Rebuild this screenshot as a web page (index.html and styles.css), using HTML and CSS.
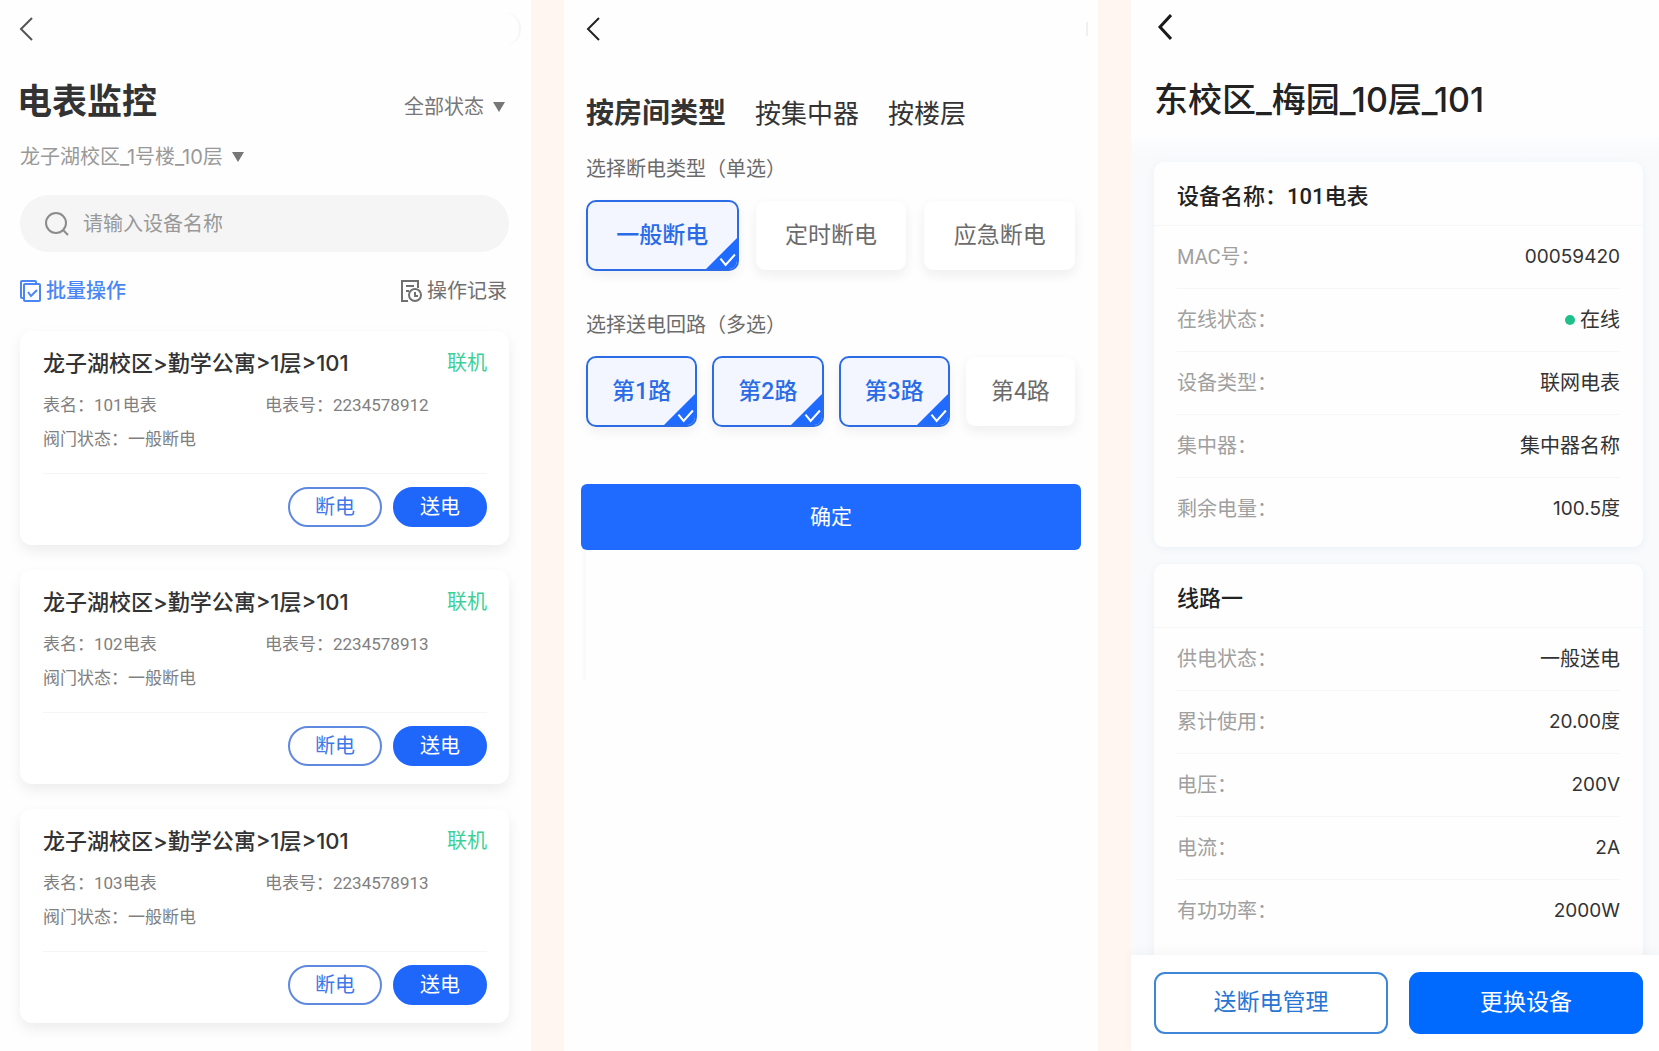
FILE: index.html
```html
<!DOCTYPE html>
<html lang="zh-CN">
<head>
<meta charset="utf-8">
<meta name="viewport" content="width=device-width, initial-scale=1">
<title>电表监控</title>
<link rel="stylesheet" href="styles.css">
</head>
<body>
<div class="board">

  <main class="screen monitor">
    <header class="topbar">
      <button class="back" type="button" aria-label="返回"><svg width="14" height="26" viewBox="0 0 14 26" fill="none" stroke="#555" stroke-width="2"><path d="M13 2 2 13l11 11"/></svg></button>
      <span class="capsule"></span>
    </header>
    <div class="title-row">
      <h1 class="title">电表监控</h1>
      <div class="picker">
        <select class="picker-select" aria-label="状态"><option>全部状态</option></select>
        <svg class="caret" width="12" height="10" viewBox="0 0 12 10"><path d="M0 0h12L6 10z"/></svg>
      </div>
    </div>
    <div class="picker place">
      <select class="picker-select" aria-label="位置"><option>龙子湖校区_1号楼_10层</option></select>
      <svg class="caret" width="12" height="10" viewBox="0 0 12 10"><path d="M0 0h12L6 10z"/></svg>
    </div>
    <div class="search">
      <svg width="24" height="26" viewBox="0 0 24 26" fill="none" stroke="#8c8c8c" stroke-width="2"><circle cx="11" cy="12" r="10"/><path d="m18 19 5 5"/></svg>
      <input class="search-input" type="text" placeholder="请输入设备名称" aria-label="设备名称">
    </div>
    <div class="tools">
      <button class="tool tool-batch" type="button">
        <svg width="21" height="22" viewBox="0 0 21 22" fill="none" stroke="currentColor" stroke-width="2"><path d="M4 18H2q-1 0-1-1V2q0-1 1-1h13q1 0 1 1v2"/><rect x="4" y="4" width="16" height="17" rx="1"/><path d="m8 12 3 4 6-6"/></svg>
        批量操作
      </button>
      <a class="tool tool-log" href="#">
        <svg width="21" height="22" viewBox="0 0 21 22" fill="none" stroke="currentColor" stroke-width="2"><path d="M7 21H1V1h16v7"/><path d="M5 6h8M5 11h3"/><circle cx="14" cy="15" r="6"/><path d="M14 12v4h3"/></svg>
        操作记录
      </a>
    </div>

    <section class="meters">
      <article class="meter">
        <div class="meter-head"><h2 class="meter-name">龙子湖校区&gt;勤学公寓&gt;1层&gt;101</h2><span class="status">联机</span></div>
        <div class="meta"><span>表名：101电表</span><span>电表号：2234578912</span><span>阀门状态：一般断电</span></div>
        <div class="meter-actions"><button class="pill" type="button">断电</button><button class="pill pill-solid" type="button">送电</button></div>
      </article>
      <article class="meter">
        <div class="meter-head"><h2 class="meter-name">龙子湖校区&gt;勤学公寓&gt;1层&gt;101</h2><span class="status">联机</span></div>
        <div class="meta"><span>表名：102电表</span><span>电表号：2234578913</span><span>阀门状态：一般断电</span></div>
        <div class="meter-actions"><button class="pill" type="button">断电</button><button class="pill pill-solid" type="button">送电</button></div>
      </article>
      <article class="meter">
        <div class="meter-head"><h2 class="meter-name">龙子湖校区&gt;勤学公寓&gt;1层&gt;101</h2><span class="status">联机</span></div>
        <div class="meta"><span>表名：103电表</span><span>电表号：2234578913</span><span>阀门状态：一般断电</span></div>
        <div class="meter-actions"><button class="pill" type="button">断电</button><button class="pill pill-solid" type="button">送电</button></div>
      </article>
    </section>
  </main>

  <form class="screen control">
    <header class="topbar">
      <button class="back" type="button" aria-label="返回"><svg width="14" height="26" viewBox="0 0 14 26" fill="none" stroke="#222" stroke-width="2"><path d="M13 2 2 13l11 11"/></svg></button>
      <span class="capsule-edge"></span>
    </header>
    <nav class="tabs">
      <button class="tab tab-active" type="button">按房间类型</button>
      <button class="tab" type="button">按集中器</button>
      <button class="tab" type="button">按楼层</button>
    </nav>
    <fieldset class="group">
      <legend class="legend">选择断电类型（单选）</legend>
      <div class="options options-3">
        <label class="option"><input class="choice" type="radio" name="cut" checked><span>一般断电</span><svg class="tick" viewBox="0 0 32 32"><path class="tick-bg" d="M32 0v32H0z"/><path class="tick-mark" d="m15 21 5 6 9-10"/></svg></label>
        <label class="option"><input class="choice" type="radio" name="cut"><span>定时断电</span></label>
        <label class="option"><input class="choice" type="radio" name="cut"><span>应急断电</span></label>
      </div>
    </fieldset>
    <fieldset class="group">
      <legend class="legend">选择送电回路（多选）</legend>
      <div class="options options-4">
        <label class="option"><input class="choice" type="checkbox" checked><span>第1路</span><svg class="tick" viewBox="0 0 32 32"><path class="tick-bg" d="M32 0v32H0z"/><path class="tick-mark" d="m15 21 5 6 9-10"/></svg></label>
        <label class="option"><input class="choice" type="checkbox" checked><span>第2路</span><svg class="tick" viewBox="0 0 32 32"><path class="tick-bg" d="M32 0v32H0z"/><path class="tick-mark" d="m15 21 5 6 9-10"/></svg></label>
        <label class="option"><input class="choice" type="checkbox" checked><span>第3路</span><svg class="tick" viewBox="0 0 32 32"><path class="tick-bg" d="M32 0v32H0z"/><path class="tick-mark" d="m15 21 5 6 9-10"/></svg></label>
        <label class="option"><input class="choice" type="checkbox"><span>第4路</span></label>
      </div>
    </fieldset>
    <button class="confirm" type="submit">确定</button>
    <div class="sheet-edge"></div>
  </form>

  <main class="screen detail">
    <header class="detail-head">
      <button class="back" type="button" aria-label="返回"><svg width="15" height="28" viewBox="0 0 15 28" fill="none" stroke="#1a1a1a" stroke-width="3"><path d="M14 2 3 14l11 12"/></svg></button>
      <h1 class="title title-device">东校区_梅园_10层_101</h1>
    </header>
    <div class="panels">
      <section class="panel">
        <h2 class="panel-title">设备名称：101电表</h2>
        <dl class="rows">
          <div class="row"><dt>MAC号：</dt><dd class="number">00059420</dd></div>
          <div class="row"><dt>在线状态：</dt><dd class="online">在线</dd></div>
          <div class="row"><dt>设备类型：</dt><dd>联网电表</dd></div>
          <div class="row"><dt>集中器：</dt><dd>集中器名称</dd></div>
          <div class="row"><dt>剩余电量：</dt><dd class="number">100.5度</dd></div>
        </dl>
      </section>
      <section class="panel panel-open">
        <h2 class="panel-title">线路一</h2>
        <dl class="rows">
          <div class="row"><dt>供电状态：</dt><dd>一般送电</dd></div>
          <div class="row"><dt>累计使用：</dt><dd class="number">20.00度</dd></div>
          <div class="row"><dt>电压：</dt><dd class="number">200V</dd></div>
          <div class="row"><dt>电流：</dt><dd class="number">2A</dd></div>
          <div class="row"><dt>有功功率：</dt><dd class="number">2000W</dd></div>
        </dl>
      </section>
    </div>
    <footer class="actions">
      <button class="action" type="button">送断电管理</button>
      <button class="action action-solid" type="button">更换设备</button>
    </footer>
  </main>

</div>
</body>
</html>
```
FILE: styles.css
```css
* { box-sizing: border-box; }

body {
  margin: 0;
  background: #fff6f1;
  color: #222;
  font-family: Roboto, "Noto Sans CJK SC", sans-serif;
  font-size: 20px;
  line-height: 30px;
}

h1, h2, dl, dd, fieldset { margin: 0; }

button, input, select {
  margin: 0;
  padding: 0;
  border: 0;
  background: none;
  color: inherit;
  font: inherit;
}

svg { display: block; flex: none; }

.board {
  display: grid;
  grid-template-columns: 531fr 534fr 528fr;
  gap: 33px;
  min-height: 100vh;
}

.screen {
  display: flex;
  flex-direction: column;
  min-width: 0;
  background: #fefefe;
}

.topbar {
  display: flex;
  align-items: center;
  justify-content: space-between;
  height: 58px;
}

.title {
  font-size: 35px;
  line-height: 48px;
  font-weight: 500;
}

.title-device, .meter-name, .place, .number {
  font-family: Inter, "Noto Sans CJK SC", sans-serif;
}

/* meter list */

.monitor { padding: 0 22px 0 20px; }

.monitor .topbar { margin-right: -12px; }

.monitor .back { margin-left: -1px; }

.capsule {
  width: 34px;
  height: 34px;
  border-right: 2px solid #f5f5f5;
  border-radius: 17px;
}

.title-row {
  display: flex;
  align-items: flex-end;
  justify-content: space-between;
  margin: 21px 4px 0 -3px;
}

.monitor .title { font-weight: 700; color: #333; }

.picker {
  display: flex;
  align-items: center;
  gap: 9px;
  color: #777;
}

.title-row .picker { margin-bottom: 5px; }

.picker-select { appearance: none; }

.caret { fill: #777; }

.place {
  margin-top: 15px;
  color: #999;
}

.search {
  display: flex;
  align-items: center;
  gap: 14px;
  height: 57px;
  margin-top: 23px;
  padding: 0 25px;
  border-radius: 29px;
  background: #f5f5f5;
}

.search-input {
  flex: 1;
  min-width: 0;
  outline: 0;
}

.search-input::placeholder { color: #999; opacity: 1; }

.tools {
  display: flex;
  justify-content: space-between;
  margin: 24px 2px 0 0;
}

.tool {
  display: flex;
  align-items: center;
  gap: 5px;
  color: #707070;
  text-decoration: none;
}

.tool-batch { color: #4a86f5; font-weight: 500; }

.meters {
  display: grid;
  gap: 25px;
  margin-top: 25px;
}

.meter {
  padding: 17px 22px 18px 23px;
  border-radius: 12px;
  background: #fff;
  box-shadow: 0 6px 14px rgba(0, 0, 0, .07);
}

.meter-head {
  display: flex;
  justify-content: space-between;
}

.meter-name {
  color: #333;
  font-size: 22px;
  font-weight: 500;
  line-height: 30px;
}

.status { color: #3dcf97; }

.meta {
  display: grid;
  grid-template-columns: 1fr 1fr;
  gap: 10px 0;
  padding: 15px 0 22px;
  border-bottom: 1px solid #f5f5f5;
  color: #808080;
  font-size: 17px;
  line-height: 24px;
}

.meter-actions {
  display: flex;
  justify-content: flex-end;
  gap: 11px;
  padding-top: 13px;
}

.pill {
  width: 94px;
  height: 40px;
  border: 2px solid #5f88e0;
  border-radius: 20px;
  color: #3f78ea;
}

.pill-solid {
  border-color: #1f66fb;
  background: #1f66fb;
  color: #fff;
}

/* circuit selection */

.control { padding: 0 22px; }

.capsule-edge {
  width: 2px;
  height: 14px;
  margin-right: -12px;
  background: #f0f0f2;
}

.tabs {
  display: flex;
  align-items: center;
  gap: 29px;
  height: 40px;
  margin-top: 36px;
}

.tab {
  color: #333;
  font-size: 26px;
  white-space: nowrap;
}

.tab-active { font-size: 28px; font-weight: 700; }

.group {
  min-width: 0;
  margin-top: 20px;
  padding: 0;
  border: 0;
}

.group + .group { margin-top: 39px; }

.legend { padding: 0; color: #6b6b6b; }

.options { display: grid; margin-top: 16px; }

.options-3 { grid-template-columns: repeat(3, 1fr); gap: 16px; }

.options-4 { grid-template-columns: repeat(4, 1fr); gap: 15px; }

.option {
  position: relative;
  display: flex;
  align-items: center;
  justify-content: center;
  height: 71px;
  border: 2px solid transparent;
  border-radius: 10px;
  background: #fff;
  background-clip: padding-box;
  box-shadow: 0 5px 12px rgba(0, 0, 0, .06);
  overflow: hidden;
  color: #6b6b6b;
  font-size: 23px;
}

.option:has(:checked) {
  border-color: #2b6ce6;
  background: #f3f6ff;
  color: #2b6ce6;
  font-weight: 500;
}

.choice {
  position: absolute;
  opacity: 0;
}

.tick {
  position: absolute;
  right: -1px;
  bottom: -1px;
  width: 33px;
  height: 33px;
}

.tick-bg { fill: #1f6bff; }

.tick-mark { fill: none; stroke: #fff; stroke-width: 2; }

.confirm {
  height: 66px;
  margin: 57px -5px 0;
  border-radius: 6px;
  background: #1f6bff;
  color: #fff;
  font-size: 21px;
}

.sheet-edge {
  width: 5px;
  height: 130px;
  margin-left: -5px;
  background: linear-gradient(to right, #fefefe, #f8f8f8);
}

/* device detail */

.detail { height: 100vh; }

.detail-head { padding: 13px 22px 13px 26px; }

.detail-head .title-device {
  margin: 35px 0 0 -3px;
  font-size: 34px;
}

.detail .back { display: block; }

.panels {
  display: flex;
  flex: 1;
  flex-direction: column;
  gap: 17px;
  min-height: 0;
  padding: 25px 16px 0 23px;
  overflow: hidden;
  background: linear-gradient(#fcfdfe, #f8fafc 20px);
}

.panel {
  flex: none;
  padding-bottom: 6px;
  border-radius: 10px;
  background: #fefefe;
  box-shadow: 0 2px 10px rgba(40, 70, 110, .05);
}

.panel-open { flex: 1 0 auto; border-radius: 10px 10px 0 0; }

.panel-title {
  height: 64px;
  padding: 20px 23px 0;
  border-bottom: 1px solid #f5f6f7;
  font-size: 22px;
  font-weight: 500;
}

.rows { padding: 0 23px; }

.row {
  display: flex;
  align-items: center;
  justify-content: space-between;
  height: 63px;
  border-bottom: 1px solid #f5f6f7;
}

.row:last-child { border-bottom-color: transparent; }

.row dt { color: #a0a0a0; }

.row dd { color: #333; }

.row .number { font-size: 19px; }

.online {
  display: flex;
  align-items: center;
  gap: 5px;
}

.online::before {
  width: 10px;
  height: 10px;
  border-radius: 50%;
  background: #1fc08a;
  content: "";
}

.actions {
  position: relative;
  display: grid;
  grid-template-columns: 1fr 1fr;
  gap: 21px;
  padding: 17px 16px 17px 23px;
  background: #fff;
  box-shadow: 0 -4px 10px rgba(0, 0, 0, .03);
}

.action {
  height: 62px;
  border: 2px solid #3d86d8;
  border-radius: 11px;
  color: #2a75d2;
  font-size: 23px;
}

.action-solid {
  border-color: #006aff;
  background: #006aff;
  color: #fff;
}
```
